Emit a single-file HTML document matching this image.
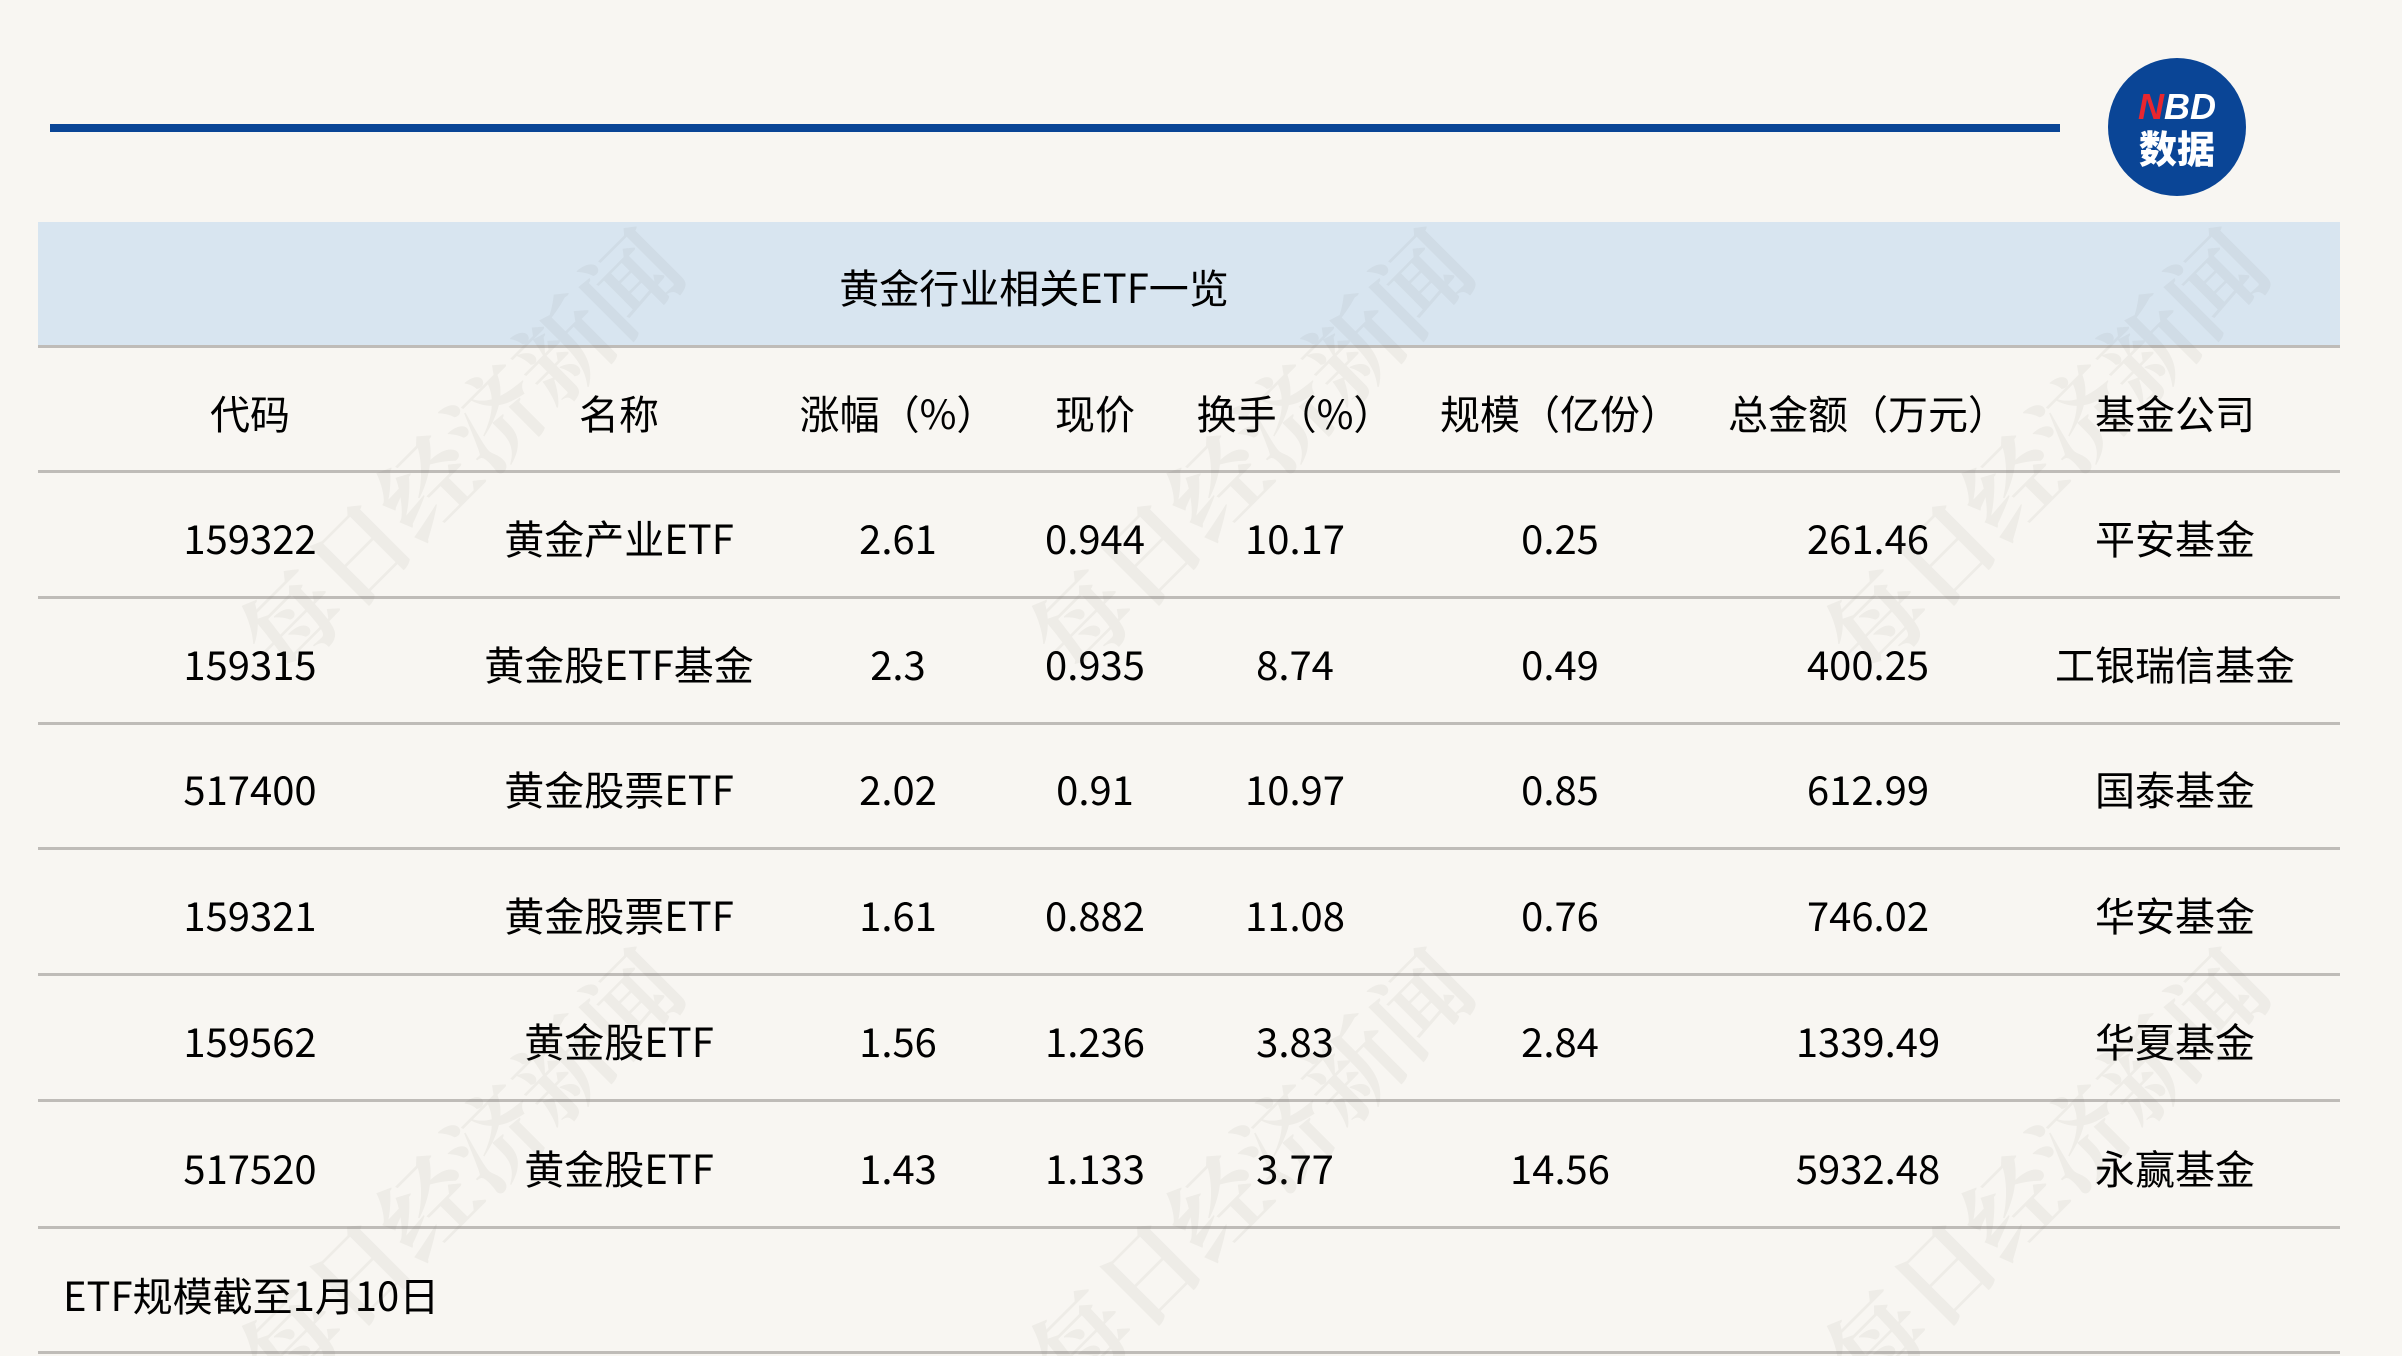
<!DOCTYPE html>
<html><head><meta charset="utf-8"><style>
html,body{margin:0;padding:0;width:2402px;height:1356px;overflow:hidden;}
#wrap{width:2402px;height:1356px;background:#f8f6f2;position:relative;overflow:hidden;font-family:"Noto Sans CJK SC","Liberation Sans",sans-serif;color:#000;}
.abs{position:absolute;}
.bar{left:50px;top:124px;width:2010px;height:8px;background:#0a4596;}
.logo{left:2108px;top:58px;width:138px;height:138px;border-radius:50%;background:#0a4596;color:#fff;text-align:center;font-weight:bold;}
.band{left:38px;top:222px;width:2302px;height:124px;background:#d8e5f0;}
.line{left:38px;width:2302px;height:3px;background:#bfbcb8;}
.t{position:absolute;transform:translate(-50%,-50%);font-size:40px;line-height:1;white-space:nowrap;}
.wm{position:absolute;font-size:96px;font-weight:bold;color:rgba(120,110,100,0.07);transform:rotate(-45deg);white-space:nowrap;font-family:"Noto Serif CJK SC",serif;}
</style></head><body><div id="wrap">
<div class="abs bar"></div>
<div class="abs logo"><div style="font-size:36px;line-height:38px;margin-top:30px;font-family:'Liberation Sans',sans-serif;font-style:italic;"><span style="color:#e8262e">N</span>BD</div><div style="font-size:38px;line-height:42px;font-family:'Noto Sans CJK SC',sans-serif;font-weight:900;">数据</div></div>
<div class="abs band"></div>
<div class="abs line" style="top:345px"></div>
<div class="abs line" style="top:470px"></div>
<div class="abs line" style="top:596px"></div>
<div class="abs line" style="top:722px"></div>
<div class="abs line" style="top:847px"></div>
<div class="abs line" style="top:973px"></div>
<div class="abs line" style="top:1099px"></div>
<div class="abs line" style="top:1226px"></div>
<div class="abs line" style="top:1351px"></div>
<div class="t" style="left:1034px;top:286px">黄金行业相关ETF一览</div>
<div id="tbl"></div>
<div class="abs" style="left:63px;top:1274px;font-size:40px;line-height:1;">ETF规模截至1月10日</div>
<div class="wm" style="left:170px;top:380px">每日经济新闻</div>
<div class="wm" style="left:960px;top:380px">每日经济新闻</div>
<div class="wm" style="left:1755px;top:380px">每日经济新闻</div>
<div class="wm" style="left:170px;top:1100px">每日经济新闻</div>
<div class="wm" style="left:960px;top:1100px">每日经济新闻</div>
<div class="wm" style="left:1755px;top:1100px">每日经济新闻</div>
</div>
<script>
var xs=[250,619,898,1095,1295,1560,1868,2175];
var ys=[412,537,663,788,914,1040,1167];
var d=[["代码","名称","涨幅（%）","现价","换手（%）","规模（亿份）","总金额（万元）","基金公司"],
["159322","黄金产业ETF","2.61","0.944","10.17","0.25","261.46","平安基金"],
["159315","黄金股ETF基金","2.3","0.935","8.74","0.49","400.25","工银瑞信基金"],
["517400","黄金股票ETF","2.02","0.91","10.97","0.85","612.99","国泰基金"],
["159321","黄金股票ETF","1.61","0.882","11.08","0.76","746.02","华安基金"],
["159562","黄金股ETF","1.56","1.236","3.83","2.84","1339.49","华夏基金"],
["517520","黄金股ETF","1.43","1.133","3.77","14.56","5932.48","永赢基金"]];
var h="";
for(var r=0;r<d.length;r++)for(var c=0;c<8;c++)h+='<div class="t" style="left:'+xs[c]+'px;top:'+ys[r]+'px">'+d[r][c]+'</div>';
document.getElementById("tbl").innerHTML=h;
</script>
</body></html>
